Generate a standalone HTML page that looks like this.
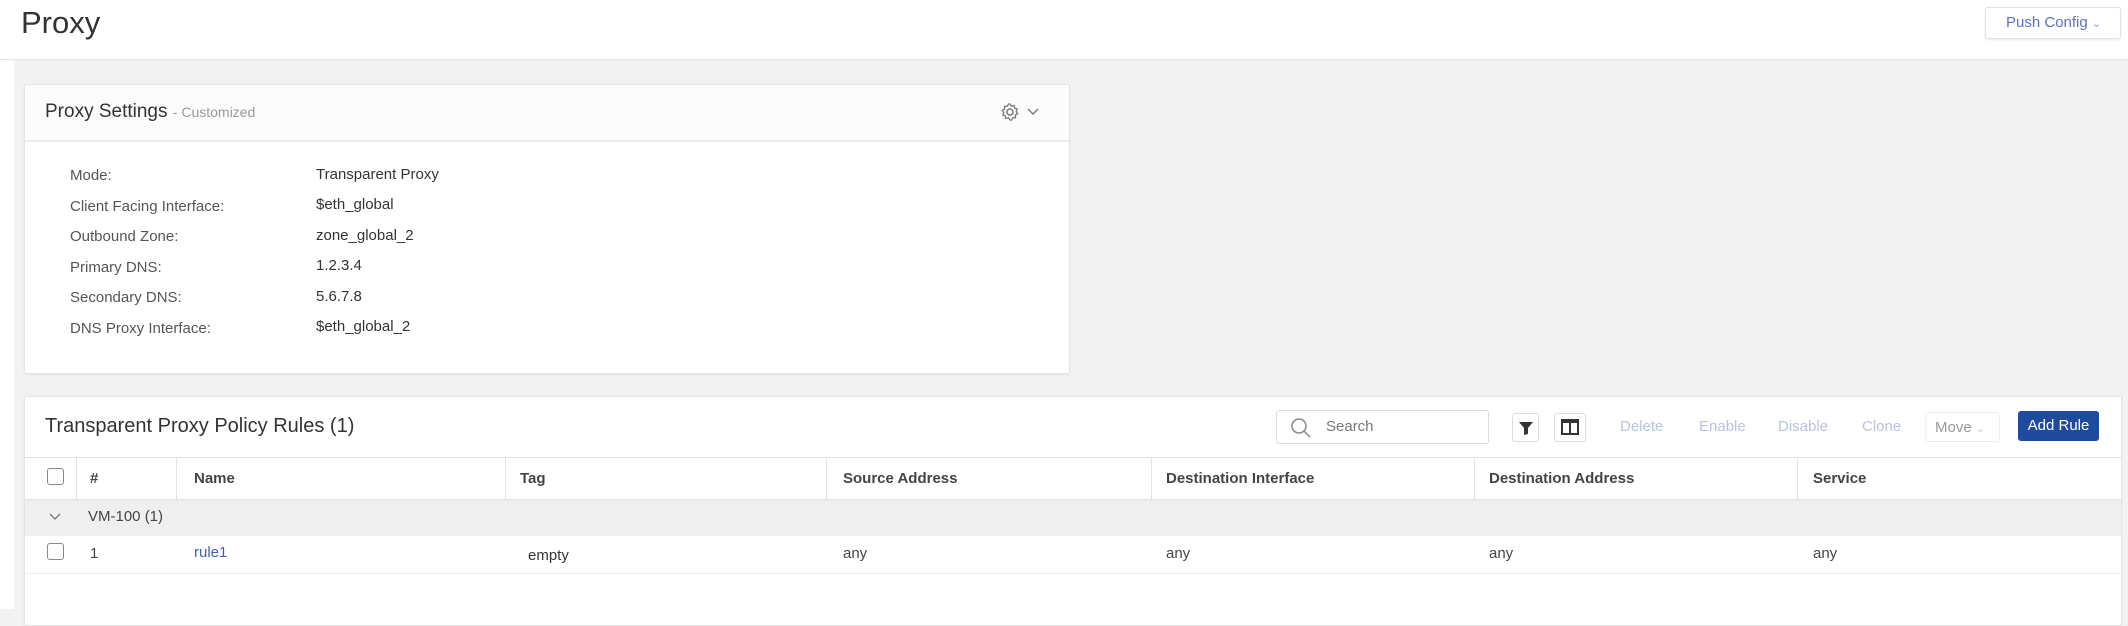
<!DOCTYPE html>
<html><head><meta charset="utf-8"><style>
*{box-sizing:border-box;margin:0;padding:0}
body{width:2128px;height:609px;overflow:hidden;background:#f2f2f2;font-family:"Liberation Sans",sans-serif;color:#333;position:relative}
.a{position:absolute;white-space:nowrap}
#hdr{position:absolute;left:0;top:0;width:2128px;height:60px;background:#fff;border-bottom:1px solid #e6e6e6}
.card{position:absolute;background:#fff;border:1px solid #e4e4e4;box-shadow:0 1px 2px rgba(0,0,0,.06)}
.lbl{font-size:15px;color:#555}
.val{font-size:15px;color:#333}
.th{font-size:15px;font-weight:bold;color:#444}
.td{font-size:15px;color:#444}
.vl{position:absolute;width:1px;background:#e2e2e2}
.cb{position:absolute;width:17px;height:17px;border:1.5px solid #888;border-radius:3px;background:#fff}
.tb{font-size:15px;color:#b8c3dc}
</style></head><body>
<div style="position:absolute;left:0;top:60px;width:14px;height:549px;background:#fff"></div>
<div id="hdr"></div>
<div class="a" style="left:21px;top:5px;font-size:31px;color:#333">Proxy</div>
<div class="a" style="left:1985px;top:7px;width:136px;height:32px;border:1px solid #e2e2e2;border-radius:3px;background:#fff;box-shadow:0 1px 2px rgba(0,0,0,.08);font-size:15px;color:#5a72c0;line-height:30px;padding-left:20px">Push Config <span style="font-size:11px;color:#8a9ad0">&#8964;</span></div>

<div class="card" style="left:24px;top:84px;width:1046px;height:290px">
 <div style="height:57px;border-bottom:2px solid #ececec;background:#fcfcfc"></div>
</div>
<div class="a" style="left:45px;top:101px;font-size:19px;color:#333">Proxy Settings <span style="font-size:14px;color:#999">- Customized</span></div>
<svg class="a" style="left:1000px;top:102px" width="20" height="20" viewBox="0 0 20 20"><circle cx="10" cy="10" r="3" fill="none" stroke="#777" stroke-width="1.5"/><path d="M10 2l1.5 2.2 2.6-.7.6 2.6 2.5 1-1 2.4 1.5 2.2-2.3 1.3.1 2.7-2.7.1-1.3 2.3L10 18l-1.5-2.2-2.6.7-.6-2.6-2.5-1 1-2.4L2.3 8.3l2.3-1.3-.1-2.7 2.7-.1L8.5 2z" fill="none" stroke="#777" stroke-width="1.3"/></svg>
<svg class="a" style="left:1027px;top:107px" width="12" height="10"><path d="M1 2l5 5 5-5" fill="none" stroke="#777" stroke-width="1.4"/></svg>

<div class="a lbl" style="left:70px;top:167px">Mode:</div><div class="a val" style="left:316px;top:166px">Transparent Proxy</div>
<div class="a lbl" style="left:70px;top:198px">Client Facing Interface:</div><div class="a val" style="left:316px;top:196px">$eth_global</div>
<div class="a lbl" style="left:70px;top:228px">Outbound Zone:</div><div class="a val" style="left:316px;top:227px">zone_global_2</div>
<div class="a lbl" style="left:70px;top:259px">Primary DNS:</div><div class="a val" style="left:316px;top:257px">1.2.3.4</div>
<div class="a lbl" style="left:70px;top:289px">Secondary DNS:</div><div class="a val" style="left:316px;top:288px">5.6.7.8</div>
<div class="a lbl" style="left:70px;top:320px">DNS Proxy Interface:</div><div class="a val" style="left:316px;top:318px">$eth_global_2</div>

<div class="card" style="left:24px;top:396px;width:2098px;height:230px"></div>
<div class="a" style="left:45px;top:415px;font-size:20px;color:#333">Transparent Proxy Policy Rules (1)</div>
<div class="a" style="left:1276px;top:410px;width:213px;height:34px;border:1px solid #dcdcdc;border-radius:3px;background:#fff"></div>
<svg class="a" style="left:1290px;top:417px" width="22" height="22"><circle cx="9" cy="9" r="7" fill="none" stroke="#888" stroke-width="1.5"/><path d="M14 14l6 6" stroke="#888" stroke-width="1.5"/></svg>
<div class="a" style="left:1326px;top:418px;font-size:15px;color:#777">Search</div>
<div class="a" style="left:1512px;top:413px;width:27px;height:29px;border:1px solid #ddd;border-radius:3px;background:#fff"></div>
<svg class="a" style="left:1518px;top:420px" width="16" height="16"><path d="M1 2h14l-5 6v6l-4 1V8z" fill="#333"/></svg>
<div class="a" style="left:1554px;top:413px;width:32px;height:29px;border:1px solid #ddd;border-radius:3px;background:#fff"></div>
<svg class="a" style="left:1561px;top:419px" width="18" height="16"><rect x="1" y="1" width="16" height="14" fill="none" stroke="#333" stroke-width="2"/><rect x="1" y="1" width="16" height="3" fill="#333"/><path d="M9 1v14" stroke="#333" stroke-width="2"/></svg>
<div class="a tb" style="left:1620px;top:418px">Delete</div>
<div class="a tb" style="left:1699px;top:418px">Enable</div>
<div class="a tb" style="left:1778px;top:418px">Disable</div>
<div class="a tb" style="left:1862px;top:418px">Clone</div>
<div class="a" style="left:1925px;top:412px;width:75px;height:30px;border:1px solid #eee;border-radius:3px"></div>
<div class="a" style="left:1935px;top:419px;font-size:15px;color:#999">Move <span style="font-size:11px;color:#ccc">&#8964;</span></div>
<div class="a" style="left:2018px;top:411px;width:81px;height:30px;background:#1e4b9e;border-radius:3px;color:#fff;font-size:15px;line-height:30px;text-align:center">Add Rule</div>

<div class="a" style="left:25px;top:457px;width:2096px;height:1px;background:#e2e2e2"></div>
<div class="a" style="left:25px;top:499px;width:2096px;height:37px;background:#efefef;border-top:1px solid #e2e2e2"></div>
<div class="a" style="left:25px;top:573px;width:2096px;height:1px;background:#ececec"></div>
<div class="vl" style="left:76px;top:457px;height:42px"></div>
<div class="vl" style="left:176px;top:457px;height:42px"></div>
<div class="vl" style="left:505px;top:457px;height:42px"></div>
<div class="vl" style="left:826px;top:457px;height:42px"></div>
<div class="vl" style="left:1151px;top:457px;height:42px"></div>
<div class="vl" style="left:1474px;top:457px;height:42px"></div>
<div class="vl" style="left:1797px;top:457px;height:42px"></div>
<div class="cb" style="left:47px;top:468px"></div>
<div class="a th" style="left:90px;top:470px">#</div>
<div class="a th" style="left:194px;top:470px">Name</div>
<div class="a th" style="left:520px;top:470px">Tag</div>
<div class="a th" style="left:843px;top:470px">Source Address</div>
<div class="a th" style="left:1166px;top:470px">Destination Interface</div>
<div class="a th" style="left:1489px;top:470px">Destination Address</div>
<div class="a th" style="left:1813px;top:470px">Service</div>
<svg class="a" style="left:49px;top:512px" width="12" height="10"><path d="M1 2l5 5 5-5" fill="none" stroke="#777" stroke-width="1.3"/></svg>
<div class="a td" style="left:88px;top:508px">VM-100 (1)</div>
<div class="cb" style="left:47px;top:543px"></div>
<div class="a td" style="left:90px;top:545px">1</div>
<div class="a td" style="left:194px;top:544px;color:#3d63b8">rule1</div>
<div class="a td" style="left:528px;top:547px;color:#333">empty</div>
<div class="a td" style="left:843px;top:545px">any</div>
<div class="a td" style="left:1166px;top:545px">any</div>
<div class="a td" style="left:1489px;top:545px">any</div>
<div class="a td" style="left:1813px;top:545px">any</div>
</body></html>
